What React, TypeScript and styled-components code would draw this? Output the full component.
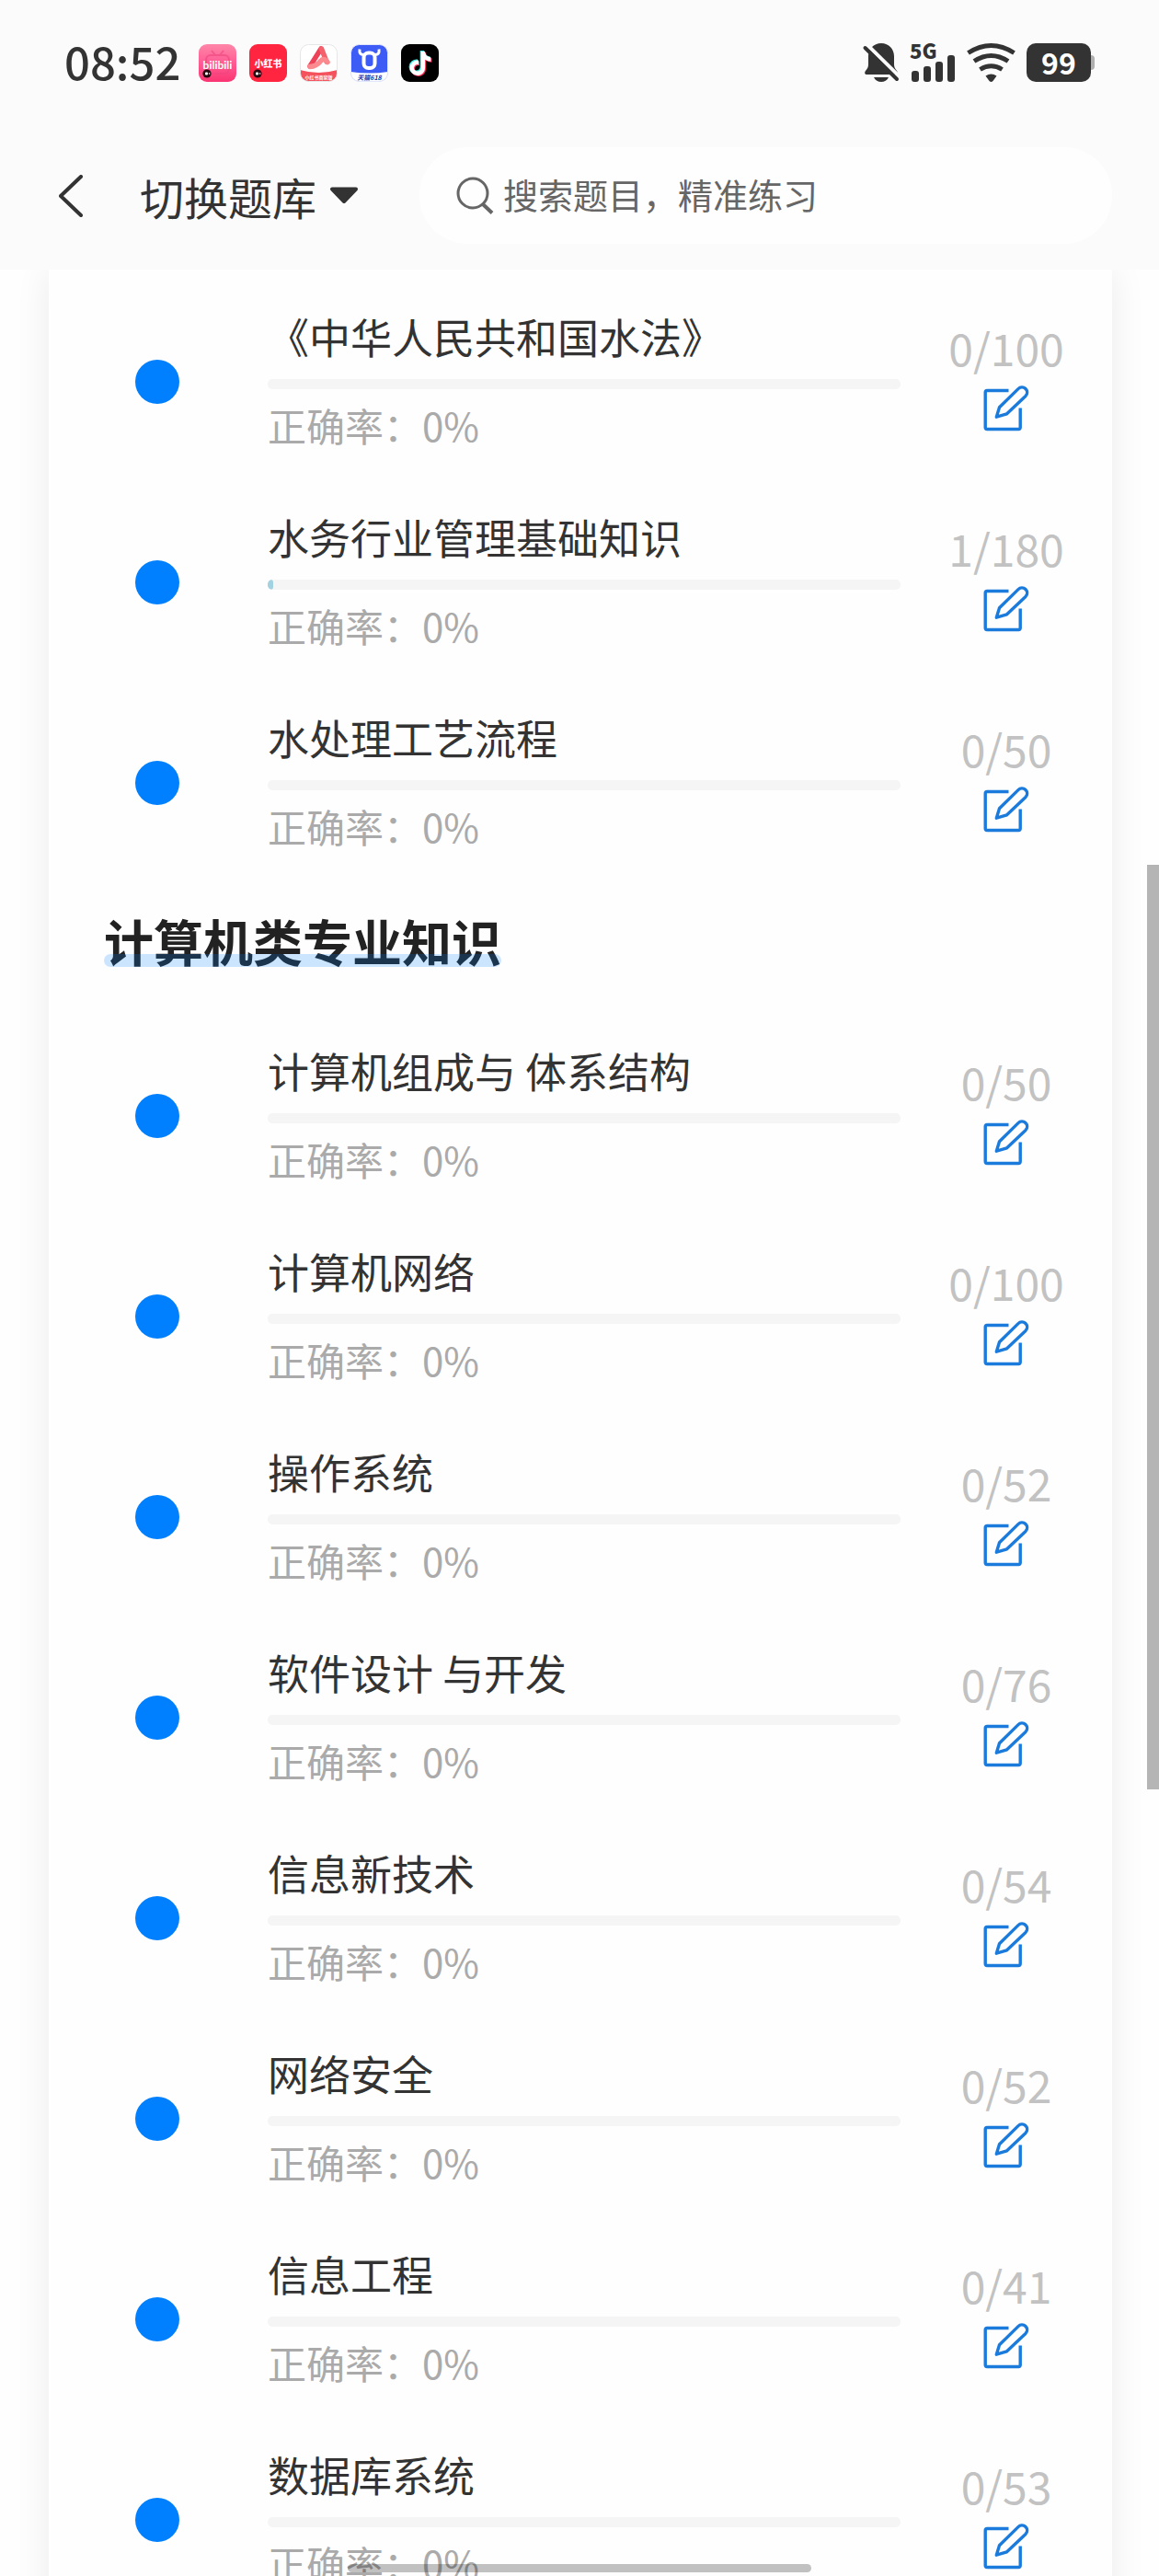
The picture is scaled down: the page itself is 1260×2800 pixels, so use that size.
import React from 'react';
import styled, { createGlobalStyle } from 'styled-components';
import { FaTiktok } from 'react-icons/fa6';

const ink = '#333333';
const chrome = '#fbfbfb';

const GlobalStyle = createGlobalStyle`
  *, *::before, *::after { box-sizing: border-box; }
  body {
    margin: 0;
    background: #fefefe;
    color: ${ink};
    font-family: "Noto Sans CJK SC", "Noto Sans", sans-serif;
  }
  button, input { font: inherit; color: inherit; }
`;

const Screen = styled.div`
  position: relative;
  display: flex;
  flex-direction: column;
  height: 100vh;
  overflow: hidden;
`;

const TopBar = styled.header`
  flex: none;
  padding-bottom: 4px;
  background: ${chrome};
`;

const StatusBar = styled.div`
  display: flex;
  align-items: center;
  justify-content: space-between;
  height: 136px;
  padding: 0 70px;
`;

const StatusGroup = styled.div<{ $gap: number }>`
  display: flex;
  align-items: center;
  gap: ${({ $gap }) => $gap}px;
`;

const Clock = styled.time`
  margin-right: 6px;
  padding-bottom: 4px;
  font-size: 49px;
  line-height: 56px;
  font-weight: 500;
`;

const AppBadge = styled.svg`
  display: block;
  width: 41px;
  height: 41px;
`;

const StatusIcon = styled.svg`
  display: block;
  height: 42px;
  overflow: visible;
`;

const Battery = styled.div`
  display: flex;
  align-items: center;
  &::after {
    content: '';
    width: 4px;
    height: 16px;
    border-radius: 0 4px 4px 0;
    background: #b0b0b0;
  }
`;

const BatteryLevel = styled.span`
  width: 70px;
  height: 42px;
  border-radius: 10px;
  background: ${ink};
  color: #ffffff;
  font-size: 32px;
  line-height: 40px;
  font-weight: 700;
  text-align: center;
`;

const NavBar = styled.nav`
  display: flex;
  align-items: center;
  height: 153px;
  padding: 0 51px 0 64px;
`;

const PlainButton = styled.button`
  display: flex;
  align-items: center;
  padding: 0;
  border: 0;
  background: none;
  cursor: pointer;
`;

const BackButton = styled(PlainButton)`
  margin-right: 62px;
`;

const BankButton = styled(PlainButton)`
  gap: 14px;
  margin-right: 66px;
  font-size: 48px;
  line-height: 56px;
  white-space: nowrap;
`;

const SearchBox = styled.label`
  display: flex;
  flex: 1;
  align-items: center;
  gap: 10px;
  min-width: 0;
  height: 105px;
  padding: 0 40px;
  border-radius: 52px;
  background: #fefefe;
  color: #666666;
`;

const SearchInput = styled.input`
  flex: 1;
  min-width: 0;
  padding: 0 0 4px;
  border: 0;
  outline: 0;
  background: none;
  font-size: 38px;
  line-height: 56px;
  &::placeholder { color: #666666; opacity: 1; }
`;

const ScrollArea = styled.main`
  flex: 1;
  min-height: 0;
  overflow-y: auto;
  scrollbar-width: none;
`;

const Card = styled.div`
  margin: 0 51px 0 53px;
  padding-top: 13px;
  background: #fefefe;
  box-shadow: 0 0 36px rgba(0, 0, 0, 0.08);
`;

const SectionHeading = styled.div`
  height: 144px;
  padding: 27px 60px 0;
`;

const HeadingText = styled.h2`
  position: relative;
  display: inline-block;
  margin: 0;
  color: #222222;
  font-size: 54px;
  line-height: 72px;
  font-weight: 700;
  &::after {
    content: '';
    position: absolute;
    right: 0;
    bottom: 8px;
    left: 0;
    height: 14px;
    border-radius: 7px;
    background: rgba(0, 128, 255, 0.2);
  }
`;

const TopicList = styled.ul`
  margin: 0;
  padding: 0;
  list-style: none;
`;

const TopicRow = styled.li`
  display: grid;
  grid-template-columns: 238px 1fr 230px;
  align-items: center;
  height: 218px;
`;

const Dot = styled.span`
  justify-self: center;
  width: 48px;
  height: 48px;
  margin-right: 2px;
  border-radius: 50%;
  background: #0080ff;
`;

const TopicBody = styled.div`
  min-width: 0;
  padding-bottom: 6px;
`;

const TopicTitle = styled.h3`
  margin: 0 0 14px;
  font-size: 45px;
  line-height: 64px;
  font-weight: 400;
  white-space: nowrap;
`;

const Track = styled.div`
  height: 11px;
  margin-bottom: 11px;
  border-radius: 5px;
  overflow: hidden;
  background: #f5f5f5;
`;

const Fill = styled.div`
  height: 100%;
  min-width: 6px;
  border-radius: 3px;
  background: #a2d2e2;
`;

const Accuracy = styled.p`
  margin: 0;
  color: #aaaaaa;
  font-size: 42px;
  line-height: 56px;
`;

const TopicSide = styled.div`
  display: flex;
  flex-direction: column;
  align-items: center;
  gap: 14px;
  padding-bottom: 12px;
`;

const Count = styled.span`
  color: #c2c2c2;
  font-size: 48px;
  line-height: 56px;
`;

const ScrollThumb = styled.div`
  position: absolute;
  top: 940px;
  right: 0;
  width: 13px;
  height: 1005px;
  background: #b5b5b5;
`;

const HomeIndicator = styled.div`
  position: absolute;
  bottom: 4px;
  left: 50%;
  width: 504px;
  height: 9px;
  transform: translateX(-50%);
  border-radius: 5px;
  background: rgba(0, 0, 0, 0.24);
`;

type Topic = { title: string; done: number; total: number };

const waterTopics: Topic[] = [
  { title: '《中华人民共和国水法》', done: 0, total: 100 },
  { title: '水务行业管理基础知识', done: 1, total: 180 },
  { title: '水处理工艺流程', done: 0, total: 50 },
];

const computerTopics: Topic[] = [
  { title: '计算机组成与 体系结构', done: 0, total: 50 },
  { title: '计算机网络', done: 0, total: 100 },
  { title: '操作系统', done: 0, total: 52 },
  { title: '软件设计 与开发', done: 0, total: 76 },
  { title: '信息新技术', done: 0, total: 54 },
  { title: '网络安全', done: 0, total: 52 },
  { title: '信息工程', done: 0, total: 41 },
  { title: '数据库系统', done: 0, total: 53 },
];

const badgeFont = '"Noto Sans CJK SC", sans-serif';

function BilibiliBadge() {
  return (
    <AppBadge viewBox="0 0 41 41" aria-hidden="true">
      <defs>
        <linearGradient id="pink" x1="0" y1="0" x2="0" y2="1">
          <stop offset="0" stopColor="#ff86a8" />
          <stop offset="0.4" stopColor="#ff6498" />
          <stop offset="1" stopColor="#fb3574" />
        </linearGradient>
      </defs>
      <rect width="41" height="41" rx="9" fill="url(#pink)" />
      <g fill="none" stroke="#f0457f" strokeWidth="2" opacity="0.6">
        <rect x="8" y="12" width="25" height="20" rx="5" />
        <path d="M14 7l4 5M27 7l-4 5" />
      </g>
      <text x="20.5" y="26.500" textAnchor="middle" fontFamily="Lato, sans-serif" fontWeight="700" fontSize="12" fill="#ffffff">bilibili</text>
      <circle cx="9" cy="32" r="4.6" fill="#26060f" />
      <rect x="7" y="30.4" width="3" height="3.2" rx="1" fill="#ffffff" />
      <path d="M10.6 32l1.6-1.3v2.6z" fill="#ffffff" />
    </AppBadge>
  );
}

function RedBookBadge() {
  return (
    <AppBadge viewBox="0 0 41 41" aria-hidden="true">
      <rect width="41" height="41" rx="9" fill="#ff2440" />
      <text x="20.5" y="24.5" textAnchor="middle" fontFamily={badgeFont} fontWeight="900" fontSize="10" fill="#ffffff">小红书</text>
      <circle cx="9" cy="32" r="4.6" fill="#26060f" />
      <rect x="7" y="30.4" width="3" height="3.2" rx="1" fill="#ffffff" />
      <path d="M10.6 32l1.6-1.3v2.6z" fill="#ffffff" />
    </AppBadge>
  );
}

function MerchantBadge() {
  return (
    <AppBadge viewBox="0 0 41 41" aria-hidden="true">
      <defs>
        <clipPath id="merchantClip"><rect x="0.5" y="0.5" width="40" height="40" rx="9" /></clipPath>
      </defs>
      <g clipPath="url(#merchantClip)">
        <rect width="41" height="41" fill="#ffffff" />
        <path d="M0 28Q20.500 34 41 28V41H0z" fill="#f4525c" />
      </g>
      <path d="M11 24L23 5" stroke="#ee4258" strokeWidth="5.500" strokeLinecap="round" fill="none" />
      <path d="M23.500 5L29 19" stroke="#f4606c" strokeWidth="5.500" strokeLinecap="round" fill="none" />
      <path d="M11 24.500Q18 24 22 19T30 19.500" stroke="#fb8a8e" strokeWidth="5.500" strokeLinecap="round" fill="none" />
      <text x="20.5" y="38" textAnchor="middle" fontFamily={badgeFont} fontWeight="700" fontSize="5" fill="#ffffff">小红书商家版</text>
      <rect x="0.5" y="0.5" width="40" height="40" rx="9" fill="none" stroke="#e6e6e6" />
    </AppBadge>
  );
}

function TmallBadge() {
  return (
    <AppBadge viewBox="0 0 41 41" aria-hidden="true">
      <defs>
        <clipPath id="tmallClip"><rect x="0.5" y="0.5" width="40" height="40" rx="9" /></clipPath>
      </defs>
      <g clipPath="url(#tmallClip)">
        <rect width="41" height="41" fill="#3d5cf5" />
        <path d="M0 30Q20.500 33 41 30V41H0z" fill="#ffffff" />
      </g>
      <rect x="14.500" y="9.500" width="12" height="16.500" rx="5" fill="none" stroke="#ffffff" strokeWidth="4" />
      <path d="M10 5.500Q9 12 15 11.500M31 5.500Q32 12 26 11.500" fill="none" stroke="#ffffff" strokeWidth="3" />
      <text x="20.5" y="38.500" textAnchor="middle" fontFamily={badgeFont} fontWeight="700" fontStyle="italic" fontSize="7" fill="#2438a8">天猫618</text>
      <rect x="0.5" y="0.5" width="40" height="40" rx="9" fill="none" stroke="#e2e6fa" />
    </AppBadge>
  );
}

function DouyinBadge() {
  return (
    <AppBadge viewBox="0 0 41 41" aria-hidden="true">
      <rect width="41" height="41" rx="9" fill="#000000" />
      <FaTiktok size={26} x={7} y={7} color="#3ff0e6" />
      <FaTiktok size={26} x={9} y={9} color="#fb2f5b" />
      <FaTiktok size={26} x={8} y={8} color="#ffffff" />
    </AppBadge>
  );
}

function MutedBell() {
  return (
    <StatusIcon width="38" viewBox="0 0 38 42" aria-hidden="true">
      <path d="M19 0C10.500 0 5 6.500 5 14v9c0 3-1 4.500-3 7-1.500 2-1 4 1.500 4h31c2.500 0 3-2 1.500-4-2-2.500-3-4-3-7v-9C33 6.500 27.500 0 19 0z" fill={ink} />
      <path d="M11 37h16c-1.500 3.500-4.500 5-8 5s-6.500-1.500-8-5z" fill={ink} />
      <path d="M2 0L38 35.500" stroke={chrome} strokeWidth="4" />
      <path d="M1.500 5L36 39" stroke={ink} strokeWidth="4" strokeLinecap="round" />
    </StatusIcon>
  );
}

function Signal() {
  return (
    <StatusIcon width="50" viewBox="0 0 50 42" aria-label="5G">
      <text x="0" y="16.500" fontFamily={badgeFont} fontWeight="900" fontSize="22" fill={ink}>5G</text>
      <rect x="2" y="30" width="8" height="12" rx="3" fill={ink} />
      <rect x="15" y="25" width="8" height="17" rx="3" fill={ink} />
      <rect x="28" y="20" width="8" height="22" rx="3" fill={ink} />
      <rect x="41" y="13" width="8" height="29" rx="3" fill={ink} />
    </StatusIcon>
  );
}

function Wifi() {
  return (
    <StatusIcon width="53" viewBox="0 0 53 42" aria-hidden="true">
      <g fill="none" stroke={ink} strokeWidth="5">
        <path d="M1.500 10.500Q26.500-5.500 51.500 10.500" />
        <path d="M8 19.500Q26.500 7.500 45 19.500" />
        <path d="M14.500 28.500Q26.500 21 38.500 28.500" />
      </g>
      <path d="M20.500 35.500Q26.500 31.500 32.500 35.500L28.500 41Q26.500 43 24.500 41z" fill={ink} />
    </StatusIcon>
  );
}

function EditIcon() {
  return (
    <svg width="50" height="50" viewBox="0 0 50 50" fill="none" stroke="#1a7bdc" strokeWidth="3.4" strokeLinejoin="round" aria-hidden="true">
      <path d="M27.500 5.500H4.200a2 2 0 0 0-2 2V45.500a2 2 0 0 0 2 2H38.200a2 2 0 0 0 2-2V24.500" />
      <path d="M14.300 34.200L17.500 23.800 38 3.600A5.500 5.500 0 0 1 46 11.400L25.600 30.800z" />
    </svg>
  );
}

function TopicItem({ title, done, total }: Topic) {
  return (
    <TopicRow>
      <Dot />
      <TopicBody>
        <TopicTitle>{title}</TopicTitle>
        <Track role="progressbar" aria-label={title} aria-valuenow={done} aria-valuemin={0} aria-valuemax={total}>
          {done > 0 && <Fill style={{ width: `${(done / total) * 100}%` }} />}
        </Track>
        <Accuracy>正确率：0%</Accuracy>
      </TopicBody>
      <TopicSide>
        <Count>{done}/{total}</Count>
        <PlainButton type="button" aria-label={title}>
          <EditIcon />
        </PlainButton>
      </TopicSide>
    </TopicRow>
  );
}

export default function App() {
  return (
    <Screen>
      <GlobalStyle />
      <TopBar>
        <StatusBar>
          <StatusGroup $gap={14}>
            <Clock>08:52</Clock>
            <BilibiliBadge />
            <RedBookBadge />
            <MerchantBadge />
            <TmallBadge />
            <DouyinBadge />
          </StatusGroup>
          <StatusGroup $gap={12}>
            <MutedBell />
            <Signal />
            <Wifi />
            <Battery>
              <BatteryLevel>99</BatteryLevel>
            </Battery>
          </StatusGroup>
        </StatusBar>
        <NavBar>
          <BackButton type="button" aria-label="返回">
            <svg width="26" height="46" viewBox="0 0 26 46" fill="none" stroke={ink} strokeWidth="4" strokeLinecap="round" strokeLinejoin="round" aria-hidden="true">
              <path d="M24 2L2 23l22 21" />
            </svg>
          </BackButton>
          <BankButton type="button">
            切换题库
            <svg width="32" height="19" viewBox="0 0 32 19" aria-hidden="true">
              <path d="M3 2.500H29L16 16z" fill={ink} stroke={ink} strokeWidth="4" strokeLinejoin="round" />
            </svg>
          </BankButton>
          <SearchBox>
            <svg width="41" height="41" viewBox="0 0 41 41" fill="none" stroke="#666666" strokeWidth="3" aria-hidden="true">
              <circle cx="18" cy="18" r="16" />
              <path d="M29 30l10 9.500" strokeWidth="4" />
            </svg>
            <SearchInput type="text" placeholder="搜索题目，精准练习" aria-label="搜索题目" />
          </SearchBox>
        </NavBar>
      </TopBar>
      <ScrollArea>
        <Card>
          <TopicList>
            {waterTopics.map((topic) => (
              <TopicItem key={topic.title} {...topic} />
            ))}
          </TopicList>
          <SectionHeading>
            <HeadingText>计算机类专业知识</HeadingText>
          </SectionHeading>
          <TopicList>
            {computerTopics.map((topic) => (
              <TopicItem key={topic.title} {...topic} />
            ))}
          </TopicList>
        </Card>
      </ScrollArea>
      <ScrollThumb />
      <HomeIndicator />
    </Screen>
  );
}
